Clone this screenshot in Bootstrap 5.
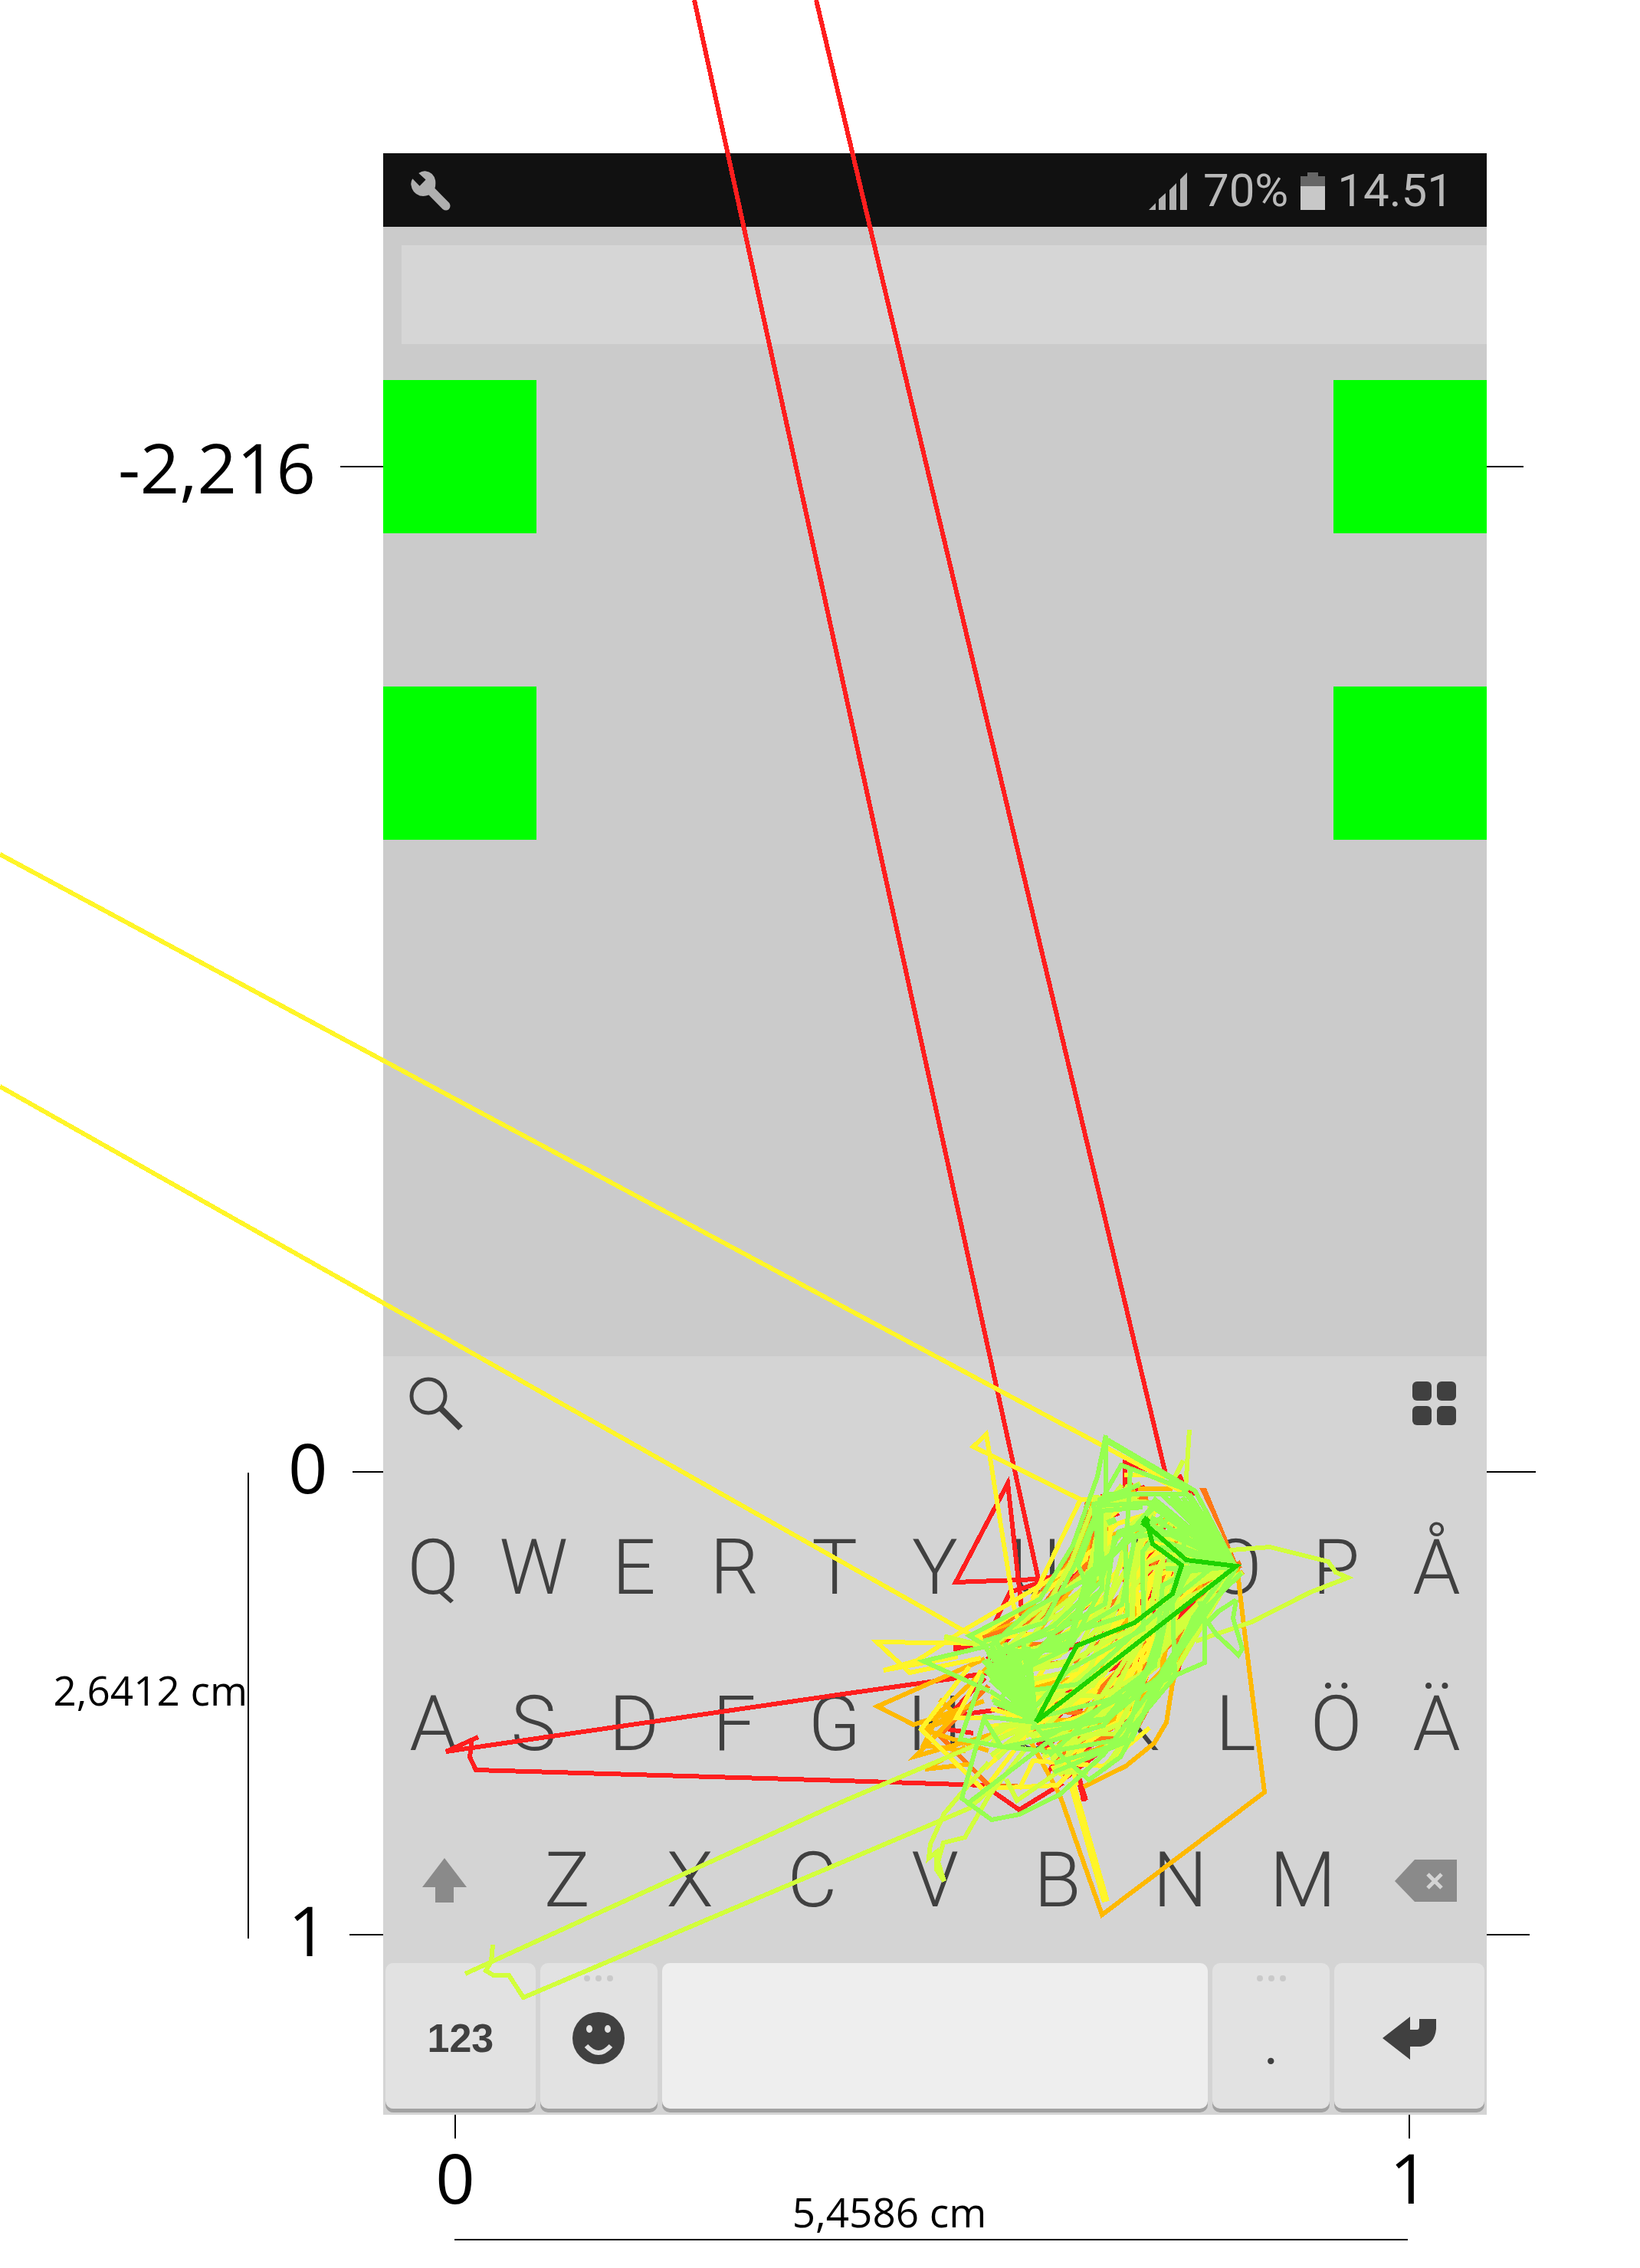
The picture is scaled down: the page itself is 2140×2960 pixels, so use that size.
<!DOCTYPE html>
<html lang="sv">
<head>
<meta charset="utf-8">
<meta name="viewport" content="width=device-width, initial-scale=1">
<title>Swipe traces</title>
<link href="https://cdn.jsdelivr.net/npm/bootstrap@5.3.0/dist/css/bootstrap.min.css" rel="stylesheet">
<script src="https://cdn.jsdelivr.net/npm/bootstrap@5.3.0/dist/js/bootstrap.bundle.min.js"></script>
<style>
body { background: #fff; color: #000; font-family: "Open Sans", "Noto Sans", sans-serif; }
.figure-grid { display: grid; grid-template-columns: 500fr 1440fr 200fr; padding: 200px 0 36px; overflow: hidden; }
.axis-label { font-size: 90px; line-height: 100px; }
.raised { padding: 0 0 14px 51px; height: 100px; line-height: 86px; }
.scale-label { font-size: 53px; line-height: 56px; white-space: nowrap; }
.tick { height: 2px; background: #000; }
.left-top { height: 100px; margin-top: 359px; gap: 32px; }
.left-low { margin-top: 1212px; height: 704px; }
.scale-y { height: 608px; margin-top: 51px; padding-bottom: 40px; border-right: 2px solid #000; }
.right-a { margin-top: 408px; width: 24%; }
.right-b { margin-top: 1310px; width: 32%; }
.right-c { margin-top: 602px; width: 28%; }
.phone { background: #cbcbcb; font-family: Roboto, sans-serif; }
.status { height: 96px; background: #111; color: #b9b9b9; font-size: 60px; line-height: 96px; padding: 2px 44px 0 36px; }
.status-gap { margin-left: 20px; }
.entry { display: block; height: 129px; margin: 24px 0 47px 24px; background: #d6d6d6; border: 0; border-radius: 0; font-size: 60px; width: calc(100% - 24px); }
.targets { display: grid; gap: 200px; height: 1274px; align-content: start; }
.target { width: 200px; height: 200px; background: #0f0; }
.board { background: #d4d4d4; height: 990px; }
.tools { height: 174px; padding: 0 39px 50px 34px; }
.letters { height: 204px; }
.letter { flex: 1 1 0; min-width: 0; border: 0; border-radius: 0; padding: 0; font: 300 100px/204px Roboto, sans-serif; color: #404040; }
.icon-letter { display: flex; align-items: center; justify-content: center; height: 204px; }
.bottom-keys { display: grid; grid-template-columns: 196fr 153fr 714fr 153fr 196fr; gap: 6px; height: 198px; padding: 6px 3px 8px; }
.slab { border: 0; border-radius: 10px; padding: 0; background: #e2e2e2; box-shadow: 0 5px 0 #a2a2a2; color: #404040; font: bold 52px/60px "Liberation Sans", sans-serif; height: 190px; }
.slab:hover { background: #e2e2e2; }
.digits { padding-top: 6px; }
.space-slab, .space-slab:hover { background: #eee; }
.axis-x { height: 162px; padding: 0 71px 0 64px; }
.stop { width: 60px; }
.stop-tick { width: 2px; height: 31px; background: #000; }
.scale-x { padding-right: 112px; padding-bottom: 7px; }
.rule-x { height: 2px; background: #000; margin: 0 103px 0 93px; }
.traces { fill: none; stroke-width: 6; shape-rendering: crispEdges; pointer-events: none; }
.c-red { stroke: #ff1e1e; } .c-orange { stroke: #ff7814; } .c-amber { stroke: #ffb900; }
.c-yellow { stroke: #fff528; } .c-lime { stroke: #d2ff3c; } .c-green { stroke: #96ff50; } .c-deep { stroke: #1ed200; }
</style>
</head>
<body>
<main class="figure-grid position-relative">
  <div>
    <div class="left-top d-flex justify-content-end align-items-center"><span class="axis-label">-2,216</span><span class="tick" style="width:56px"></span></div>
    <div class="left-low d-flex justify-content-end">
      <div class="scale-y d-flex align-items-center"><span class="scale-label">2,6412 cm</span></div>
      <div class="d-flex flex-column justify-content-between" style="width:175px">
        <div class="d-flex align-items-center justify-content-between"><span class="axis-label raised">0</span><span class="tick" style="width:40px"></span></div>
        <div class="d-flex align-items-center justify-content-between"><span class="axis-label raised">1</span><span class="tick" style="width:44px"></span></div>
      </div>
    </div>
  </div>

  <div>
    <section class="phone">
      <header class="status d-flex align-items-center">
        <svg width="52" height="52" viewBox="48 47 157 157" aria-label="Tools"><path fill="#afafaf" d="M79 56Q92 47 105 48Q138 52 145 85Q147 102 143 116L200 174Q208 187 198 199Q186 207 174 198L119 142Q102 149 84 145Q53 134 49 101Q48 88 55 78L83 107L107 82Z"/></svg>
        <svg class="ms-auto" width="51" height="49" viewBox="0 0 51 49" aria-label="Signal"><path fill="#afafaf" d="M0 49L9 40V49ZM13 49V35L22 27V49ZM27 49V23L36 14V49ZM41 49V9L50 0V49Z"/></svg>
        <span class="status-gap">70%</span>
        <svg class="mx-3" width="32" height="49" viewBox="0 0 32 49" aria-label="Battery"><path fill="#666" d="M9 0H23V5H32V20H0V5H9Z"/><path fill="#c8c8c8" d="M0 18H32V49H0Z"/></svg>
        <span>14.51</span>
      </header>
      <div class="overflow-hidden"><input class="entry form-control" type="text" aria-label="Text"></div>
      <div class="targets">
        <div class="d-flex justify-content-between"><div class="target"></div><div class="target"></div></div>
        <div class="d-flex justify-content-between"><div class="target"></div><div class="target"></div></div>
      </div>
      <div class="board">
        <div class="tools d-flex justify-content-between align-items-center">
          <button class="btn p-0 border-0" aria-label="Search"><svg class="d-block" width="70" height="70" viewBox="0 0 70 70" fill="none" stroke="#404040"><circle cx="25" cy="25" r="22" stroke-width="5"/><path d="M41 41L67 67" stroke-width="8"/></svg></button>
          <button class="btn p-0 border-0" aria-label="Apps"><svg class="d-block" width="58" height="58" viewBox="0 0 58 58" fill="#404040"><rect width="25" height="25" rx="6"/><rect x="32" width="25" height="25" rx="6"/><rect y="32" width="25" height="25" rx="6"/><rect x="32" y="32" width="25" height="25" rx="6"/></svg></button>
        </div>
        <div class="letters d-flex"><button class="btn letter">Q</button><button class="btn letter">W</button><button class="btn letter">E</button><button class="btn letter">R</button><button class="btn letter">T</button><button class="btn letter">Y</button><button class="btn letter">U</button><button class="btn letter">I</button><button class="btn letter">O</button><button class="btn letter">P</button><button class="btn letter">Å</button></div>
        <div class="letters d-flex"><button class="btn letter">A</button><button class="btn letter">S</button><button class="btn letter">D</button><button class="btn letter">F</button><button class="btn letter">G</button><button class="btn letter">H</button><button class="btn letter">J</button><button class="btn letter">K</button><button class="btn letter">L</button><button class="btn letter">Ö</button><button class="btn letter">Ä</button></div>
        <div class="letters d-flex">
          <button class="btn letter icon-letter" aria-label="Shift"><svg width="58" height="58" viewBox="0 0 58 58"><path fill="#8a8a8a" d="M29 0L58 38H41V58H17V38H0Z"/></svg></button><button class="btn letter">Z</button><button class="btn letter">X</button><button class="btn letter">C</button><button class="btn letter">V</button><button class="btn letter">B</button><button class="btn letter">N</button><button class="btn letter">M</button><button class="btn letter icon-letter" aria-label="Backspace"><svg width="81" height="55" viewBox="0 0 81 55"><path fill="#8a8a8a" d="M0 28L26 0H81V55H26Z"/><path d="M43 19L61 37M61 19L43 37" stroke="#d4d4d4" stroke-width="5"/></svg></button>
        </div>
        <div class="bottom-keys">
          <button class="btn slab digits">123</button>
          <button class="btn slab d-flex flex-column align-items-center" aria-label="Emoji">
            <svg class="mt-3" width="40" height="8" viewBox="0 0 40 8" fill="#c9c9c9"><circle cx="5" cy="4" r="4"/><circle cx="20" cy="4" r="4"/><circle cx="35" cy="4" r="4"/></svg>
            <svg class="my-auto" width="68" height="90" viewBox="0 -2 68 90"><circle cx="34" cy="34" r="34" fill="#404040"/><ellipse cx="22" cy="22" rx="4" ry="5" fill="#e2e2e2"/><ellipse cx="46" cy="22" rx="4" ry="5" fill="#e2e2e2"/><path d="M18 44Q34 62 50 44" fill="none" stroke="#e2e2e2" stroke-width="6"/></svg>
          </button>
          <button class="btn slab space-slab" aria-label="Space"></button>
          <button class="btn slab d-flex flex-column align-items-center">
            <svg class="mt-3" width="40" height="8" viewBox="0 0 40 8" fill="#c9c9c9"><circle cx="5" cy="4" r="4"/><circle cx="20" cy="4" r="4"/><circle cx="35" cy="4" r="4"/></svg>
            <span class="letter mt-4 lh-1">.</span>
          </button>
          <button class="btn slab" aria-label="Enter"><svg width="70" height="56" viewBox="0 0 70 56"><path fill="#404040" d="M0 28L36 0V17H45Q48 17 48 13V3H70V16Q68 36 50 39H36V56Z"/></svg></button>
        </div>
      </div>
    </section>
    <div class="axis-x d-flex">
      <div class="stop d-flex flex-column align-items-center"><span class="stop-tick"></span><span class="axis-label">0</span></div>
      <div class="scale-x flex-grow-1 align-self-end text-center"><span class="scale-label">5,4586 cm</span></div>
      <div class="stop d-flex flex-column align-items-center"><span class="stop-tick"></span><span class="axis-label">1</span></div>
    </div>
    <div class="rule-x"></div>
  </div>

  <div>
    <div class="tick right-a"></div>
    <div class="tick right-b"></div>
    <div class="tick right-c"></div>
  </div>

  <svg class="traces position-absolute top-0 start-0 w-100 h-100" viewBox="0 0 2140 2960" preserveAspectRatio="none" aria-hidden="true">
    <g class="c-red">
      <path d="M906 0L1355 2061L1247 2065L1315 1936L1333 2100L1340 2150M1065 0L1521 1924"/>
      <path d="M1310 2180L1242 2191L1100 2211L582 2286L624 2267L582 2286M616 2269L613 2293L621 2310L1100 2324L1284 2330L1330 2362L1387 2327M1398 2263L1414 2351M1237 2257L1270 2262"/>
      <path d="M1355 2061L1390 2055L1318 2078L1284 2145M1468 1945L1468 1909L1520 1925L1560 1950"/>
      <path stroke-width="8" d="M1244 2151H1275M1538 1925L1544 1940M1398 2290L1416 2350"/>
      <path d="M1285 2190L1237 2240L1350 2225M1420 2030L1432 1985L1460 1975"/>
    </g>
    <g id="under"></g>
    <g class="c-orange">
      <path fill="#ff7814" stroke="none" d="M1565 1942H1574L1616 2044L1612 2040Z"/>
      <path stroke-width="7" d="M1418 2070L1430 1990L1440 1960H1480M1283 2138L1360 2110L1420 2040M1400 2290L1440 2200L1480 2160"/>
      <path d="M1226 2265L1290 2200M1226 2265L1290 2330L1340 2332"/>
    </g>
    <g class="c-amber">
      <path d="M1614 2044L1624 2130L1650 2339L1438 2499L1383 2343L1345 2273"/>
      <path d="M1544 2150L1530 2197L1522 2248L1506 2275L1469 2305L1414 2332"/>
      <path d="M1285 2165L1145 2227L1192 2251L1284 2220M1290 2175L1226 2235L1205 2278L1260 2285M1226 2218L1250 2240L1205 2257L1250 2235L1195 2292L1300 2262M1260 2280L1207 2309L1270 2302M1205 2257L1290 2285M1485 1943H1530"/>
    </g>
    <g class="c-yellow">
      <path d="M0 1115L500 1384L1370 1850L1520 1930M0 1418L1257 2128L1280 2140"/>
      <path d="M1340 2150L1323 2097L1287 1872L1270 1888L1410 1957L1347 2087M1410 1957H1440L1475 1955M1450 2005L1390 2050L1257 2128L1197 2167L1153 2180L1250 2162M1290 2145L1144 2143L1187 2183L1280 2164"/>
      <path d="M1265 2175L1202 2257L1282 2335M1280 2180L1248 2242H1320M1290 2334L1380 2330L1400 2310M1330 2335L1348 2298L1440 2305L1500 2255M1380 2300L1500 2220M1467 1925H1500L1550 1950M1385 2250L1405 2330"/>
      <path stroke-width="10" d="M1398 2325L1443 2482"/>
    </g>
    <g class="c-lime">
      <path d="M607 2576L1100 2351L1284 2273L1320 2250M643 2538L641 2560L634 2572L644 2578H664L683 2607L1100 2430L1265 2360L1330 2300"/>
      <path d="M1290 2300L1253 2342L1232 2367L1214 2407L1212 2425L1222 2417L1222 2440L1232 2455L1224 2430L1231 2405L1259 2398L1291 2343L1340 2280"/>
      <path d="M1570 2040L1607 2023L1657 2019L1733 2038L1743 2052L1759 2059L1710 2078L1633 2117L1560 2142M1552 1866L1547 1943L1532 1930L1544 1906M1313 2322L1327 2350L1380 2313H1420"/>
      <path stroke-width="7" d="M1232 2136L1290 2150M1610 2050L1540 2170L1440 2310"/>
    </g>
    <g id="over"></g>
    <g class="c-green">
      <path d="M1560 1946L1443 1878V1947L1407 2043L1420 2073M1443 1873L1432 1927L1400 2017L1357 2087L1265 2135L1290 2150M1443 1947L1463 1912L1550 1945M1440 1950H1550M1475 1918L1470 2010"/>
      <path d="M1613 2088L1590 2103L1576 2117L1587 2133L1616 2160L1621 2152L1609 2112L1613 2088M1565 2090L1572 2113V2170L1480 2210L1360 2240"/>
      <path d="M1349 2250L1383 2290L1421 2323L1462 2293L1506 2213L1570 2100M1506 2200L1440 2290L1383 2342L1330 2368L1294 2375L1255 2347L1284 2243L1307 2280L1364 2285M1261 2355L1368 2273L1440 2252L1500 2180M1290 2148L1205 2168L1291 2207M1283 2185L1253 2270L1310 2280L1368 2268M1284 2240L1350 2248"/>
      <path stroke-width="8" d="M1445 1880L1552 1943M1445 1988L1456 1983"/>
    </g>
    <path class="c-deep" d="M1495 1980L1504 2015L1542 2043L1530 2080L1480 2118L1405 2148L1352 2247L1613 2044L1548 2036L1501 1995L1490 1987"/>
    <path class="c-deep" stroke-width="9" d="M1492 1989L1498 1981"/>
  </svg>
</main>
<script>
// Repeated swipes between the J and O keys, spread inside a band bounded by two edges.
const upper = [[1280, 2140], [1350, 2094], [1408, 2036], [1430, 1960], [1474, 1940]];
const lower = [[1380, 2312], [1468, 2268], [1526, 2186], [1560, 2112], [1612, 2046]];
let seed = 7;
const rnd = () => (seed = (seed * 16807) % 2147483647) / 2147483647;
const draw = (id, cls, d, w) => document.getElementById(id).insertAdjacentHTML('beforeend',
  `<path class="${cls}" stroke-width="${w}" d="${d}"/>`);
function band(id, cls, count, w) {
  for (let i = 0; i < count; i++) {
    let u = rnd(), d = '';
    for (let k = 0; k < 5; k++) {
      u = Math.min(1, Math.max(0, u + (rnd() - .5) * .45));
      const x = upper[k][0] + (lower[k][0] - upper[k][0]) * u + (rnd() - .5) * 22;
      const y = upper[k][1] + (lower[k][1] - upper[k][1]) * u + (rnd() - .5) * 18;
      d += (k ? 'L' : 'M') + Math.round(x) + ' ' + Math.round(y);
    }
    draw(id, cls, d, w);
  }
}
function fan(id, cls, ox, oy, x1, y1, x2, y2, count) {
  for (let i = 0; i < count; i++) {
    const t = i / (count - 1);
    draw(id, cls, `M${ox} ${oy}L${Math.round(x1 + (x2 - x1) * t + (rnd() - .5) * 14)} ${Math.round(y1 + (y2 - y1) * t + (rnd() - .5) * 14)}`, 6);
  }
}
band('under', 'c-red', 14, 6);
band('under', 'c-orange', 14, 6);
band('under', 'c-amber', 12, 6);
band('under', 'c-yellow', 22, 6);
fan('under', 'c-yellow', 1352, 2247, 1290, 2190, 1290, 2330, 8);
band('over', 'c-lime', 26, 6);
fan('over', 'c-lime', 1352, 2247, 1300, 2250, 1300, 2300, 6);
fan('over', 'c-lime', 1612, 2046, 1530, 1990, 1500, 2180, 12);
band('over', 'c-green', 20, 6);
fan('over', 'c-green', 1352, 2246, 1288, 2146, 1340, 2150, 12);
fan('over', 'c-green', 1352, 2246, 1286, 2150, 1300, 2225, 8);
fan('over', 'c-green', 1612, 2044, 1560, 1944, 1500, 1960, 12);
fan('over', 'c-green', 1612, 2044, 1490, 1960, 1530, 2060, 8);
</script>
</body>
</html>
